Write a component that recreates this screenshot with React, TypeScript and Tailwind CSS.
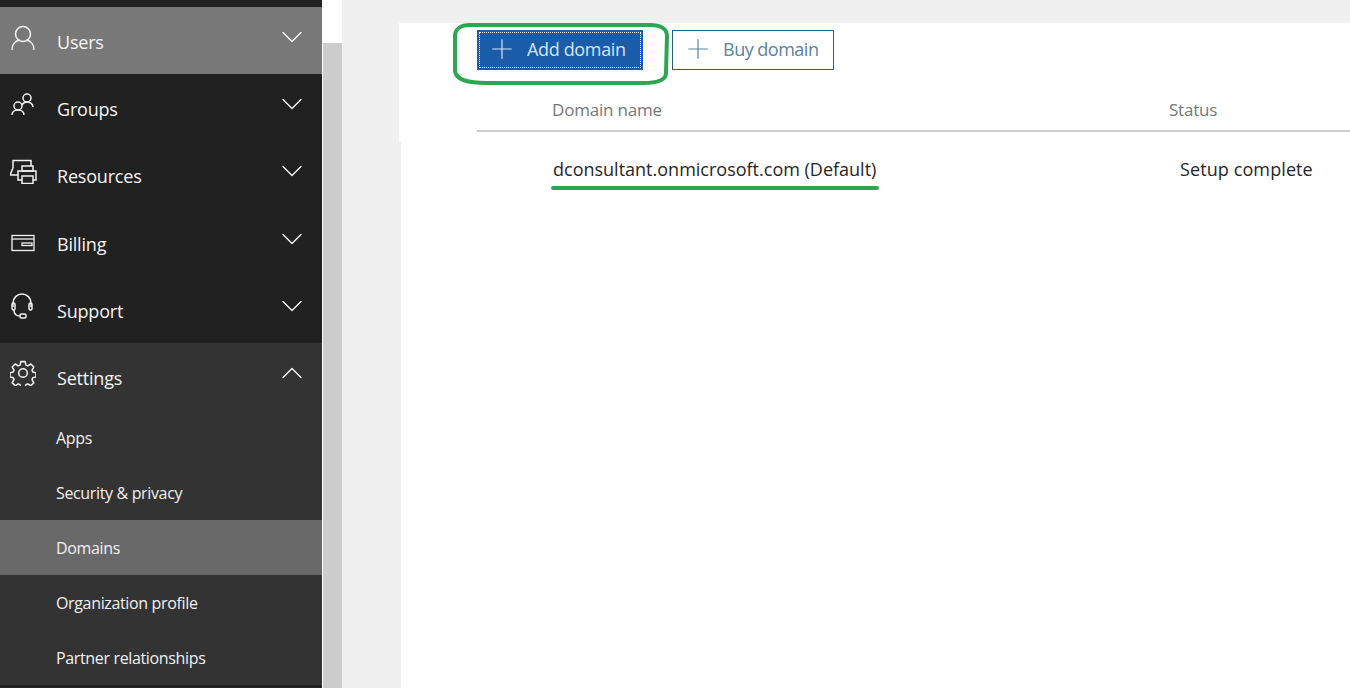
import { ChevronDown, ChevronUp, Plus } from 'lucide-react';
import type { ReactNode } from 'react';

const font = "font-['Open_Sans','Noto_Sans',sans-serif]";

const UserIcon = () => (
  <svg width="26" height="26" viewBox="0 0 26 26" fill="none" stroke="currentColor" strokeWidth="1.5">
    <circle cx="13" cy="10" r="7.500" />
    <path d="M2 26c0-5 3-9 7.500-10" />
    <path d="M24 26c0-5-3-9-7.500-10" />
  </svg>
);

const GroupIcon = () => (
  <svg width="26" height="26" viewBox="0 0 26 26" fill="none" stroke="currentColor" strokeWidth="1.5">
    <circle cx="8" cy="15" r="4" />
    <path d="M2 24c0-3 2.500-5 6-5s6 2 6 5" />
    <circle cx="17" cy="7" r="4" />
    <path d="M12 14c1-2 3-3 5-3 3 0 6 2 6 5" />
  </svg>
);

const ResourceIcon = () => (
  <svg width="28" height="26" viewBox="0 0 28 26" fill="none" stroke="currentColor" strokeWidth="1.5">
    <path d="M3 10V2.500h18V8" />
    <path d="M3 10l-3 7h8" />
    <rect x="12" y="8" width="11" height="5" />
    <rect x="8" y="13" width="18" height="9" />
    <rect x="12" y="18" width="11" height="7.500" fill="#212121" />
  </svg>
);

const BillingIcon = () => (
  <svg width="26" height="26" viewBox="0 0 26 26" fill="none" stroke="currentColor" strokeWidth="1.300">
    <rect x="2" y="9.500" width="22" height="15" />
    <path d="M2 13h22" />
    <rect x="12" y="17" width="10" height="2.500" />
  </svg>
);

const SupportIcon = () => (
  <svg width="26" height="28" viewBox="0 0 26 28" fill="none" stroke="currentColor" strokeWidth="1.500">
    <path d="M3 14V10a9 9 0 0 1 18 0v4" />
    <rect x="2" y="10" width="3" height="7" rx="1.500" />
    <rect x="19" y="10" width="3" height="7" rx="1.500" />
    <path d="M4 17c0 4 2 6 6 6" />
    <rect x="10" y="21" width="6" height="4" rx="1.500" />
  </svg>
);

const GearIcon = () => (
  <svg width="26" height="26" viewBox="0 0 24 24" fill="none" stroke="currentColor" strokeWidth="1.400" strokeLinejoin="round">
    <circle cx="12" cy="12" r="4" />
    <path d="M10 1.500h4l.7 3.200 1.700.7 2.800-1.700 2.800 2.800-1.700 2.800.7 1.700 3 .7v4l-3 .7-.7 1.700 1.700 2.800-2.800 2.800-2.800-1.700-1.700.7-.7 3h-4l-.7-3-1.700-.7-2.800 1.700-2.800-2.800 1.700-2.800-.7-1.700-3-.7v-4l3-.7.7-1.700-1.700-2.800 2.800-2.800 2.800 1.700 1.700-.7z" />
  </svg>
);

const navItems: { label: string; icon: ReactNode; bg: string; open?: boolean }[] = [
  { label: 'Users', icon: <UserIcon />, bg: 'bg-[#787878]' },
  { label: 'Groups', icon: <GroupIcon />, bg: 'bg-[#212121]' },
  { label: 'Resources', icon: <ResourceIcon />, bg: 'bg-[#212121]' },
  { label: 'Billing', icon: <BillingIcon />, bg: 'bg-[#212121]' },
  { label: 'Support', icon: <SupportIcon />, bg: 'bg-[#212121]' },
  { label: 'Settings', icon: <GearIcon />, bg: 'bg-[#333333]', open: true },
];

const subItems = ['Apps', 'Security & privacy', 'Domains', 'Organization profile', 'Partner relationships'];

export default function App() {
  return (
    <div className={`${font} relative flex h-[688px] w-[1350px] overflow-hidden bg-white`}>
      {/* Side navigation */}
      <div className="flex w-[322px] shrink-0 flex-col bg-[#212121] pt-[7px] text-white">
        {navItems.map((item) => (
          <div key={item.label} className={`flex h-[67.2px] items-start ${item.bg}`}>
            <div className="ml-[10px] mt-[17px] w-[47px] text-[#f2f2f2]">{item.icon}</div>
            <span className="mt-[22px] text-[18px] leading-[26px] tracking-[-0.2px] text-[#f5f5f5]">{item.label}</span>
            <div className="ml-auto mr-[12px] mt-[12px]">
              {item.open ? (
                <ChevronUp size={36} strokeWidth={1.2} absoluteStrokeWidth />
              ) : (
                <ChevronDown size={36} strokeWidth={1.2} absoluteStrokeWidth />
              )}
            </div>
          </div>
        ))}
        <div className="bg-[#333333]">
          {subItems.map((label) => (
            <div
              key={label}
              className={`flex h-[55px] items-center pl-[56px] text-[16px] tracking-[-0.35px] text-[#f0f0f0] ${
                label === 'Domains' ? 'bg-[#686868]' : ''
              }`}
            >
              {label}
            </div>
          ))}
        </div>
      </div>

      {/* Scrollbar strip */}
      <div className="ml-px mt-[43px] w-[19px] shrink-0 bg-[#cccccc]" />

      {/* Main content */}
      <div className="flex flex-1 flex-col bg-[#f0f0f0] pl-[57px] pt-[23px]">
        <div className="h-[119px] bg-white pl-[78px] pt-[7px]">
          <div className="flex gap-[29px]">
            <button className="flex h-[40px] w-[166px] items-center gap-[9px] bg-[#1a5ca8] pb-[2px] pl-[9px] text-[18px] tracking-[-0.35px] text-[#d4e6f7] outline-1 -outline-offset-3 outline-dotted outline-white">
              <Plus size={32} strokeWidth={1.2} absoluteStrokeWidth />
              Add domain
            </button>
            <button className="flex h-[40px] w-[162px] items-center gap-[9px] border border-[#2b5f7f] pb-[2px] pl-[9px] text-[18px] tracking-[-0.5px] text-[#5b82a3]">
              <Plus size={32} strokeWidth={1.2} absoluteStrokeWidth />
              Buy domain
            </button>
          </div>
          <div className="mt-[30px] flex h-[32px] items-center border-b-2 border-[#cccccc] pb-[10px] pl-[75px] text-[17px] tracking-[-0.2px] text-[#777777]">
            <span className="w-[617px]">Domain name</span>
            <span>Status</span>
          </div>
        </div>
        <div className="ml-[2px] flex-1 bg-white pl-[152px] pt-[14px]">
          <div className="flex items-center text-[#262626]">
            <div className="w-[627px]">
              <span className="text-[18px] leading-[26px]">dconsultant.onmicrosoft.com (Default)</span>
            </div>
            <span className="text-[18px] leading-[26px] tracking-[0.1px]">Setup complete</span>
          </div>
          <div className="-ml-[2px] mt-[4px] h-[4px] w-[328px] rounded-full bg-[#2ca650]" />
        </div>
      </div>

      {/* Hand-drawn annotation around the button */}
      <svg className="absolute left-[453px] top-[23px]" width="216" height="62" viewBox="0 0 216 62" fill="none" stroke="#2ca650" strokeWidth="4">
        <path d="M17 2L197 2C208 2 214 6 214 13L213 50C213 57 205 60 190 60L34 60C14 60 3 57 2 48L2 13C2 6 8 2 17 2Z" />
      </svg>
    </div>
  );
}
